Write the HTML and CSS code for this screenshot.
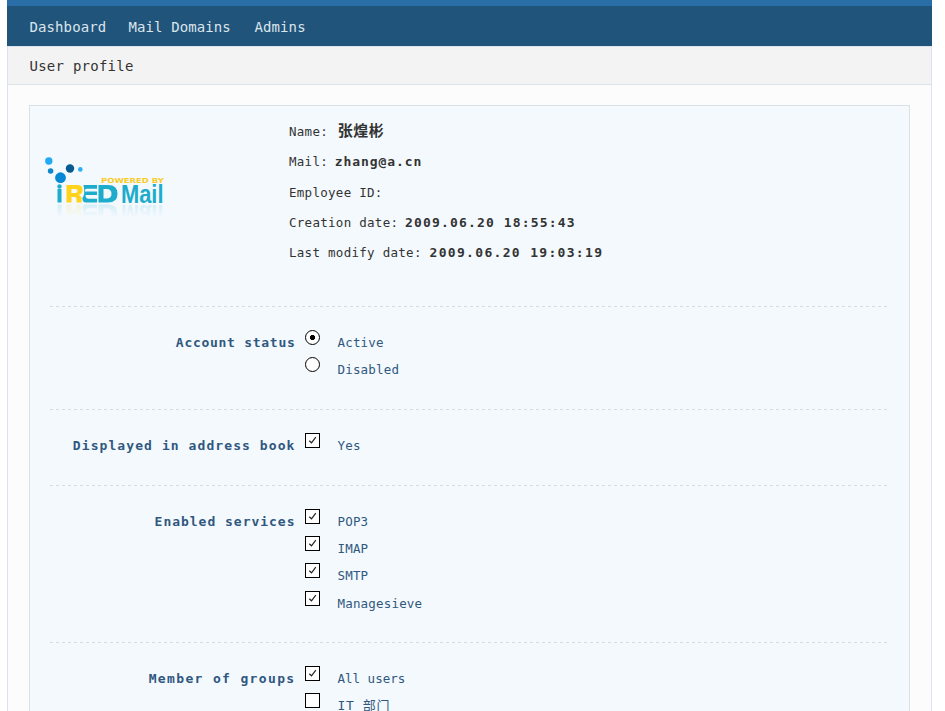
FILE: index.html
```html
<!DOCTYPE html>
<html lang="en">
<head>
<meta charset="utf-8">
<title>User profile</title>
<link rel="stylesheet" href="styles.css">
</head>
<body>
<div class="page">
  <nav class="nav"><a class="n1">Dashboard</a><a class="n2">Mail Domains</a><a class="n3">Admins</a></nav>
  <h1 class="title">User profile</h1>
  <main class="content">
    <form class="panel">
      <div class="summary">
        <svg class="logo" width="126" height="68" viewBox="0 0 126 68" role="img" aria-label="iRedMail">
          <defs>
            <linearGradient id="fade" x1="0" y1="0" x2="0" y2="1"><stop offset="0" stop-color="#f4f9fd" stop-opacity=".84"/><stop offset="1" stop-color="#f4f9fd"/></linearGradient>
            <g id="word">
              <path fill="#1eaccd" d="M12.500 34h4v13.500h-4z"/>
              <circle cx="14.500" cy="31.500" r="2.200" fill="#1eaccd"/>
              <path fill="#ffd21c" fill-rule="evenodd" d="M21.500 30h11q5 0 5 5 0 4-4 5 3 1 3 3.500v4h-5v-3.500q0-2-2-2h-3v5.500h-5zM26.500 34v4h4q2 0 2-2t-2-2z"/>
              <path fill="#1eaccd" fill-rule="evenodd" d="M38.500 30H52v3.700H41.500q-1.500 0-1.500 1.800v1h12v3.500H40.500q0 3.700 3 3.700H52v3.800H41q-4 0-3.500-5 3-3 1-12.500zM53.500 30H63q9.500 0 9.500 8.700T63 47.500h-9.500zM58.500 34v9.500h3q5 0 5-4.700t-5-4.800z"/>
              <text class="mail" x="76" y="47.500" textLength="42.500" lengthAdjust="spacingAndGlyphs">Mail</text>
            </g>
          </defs>
          <circle cx="3.800" cy="6" r="3.700" fill="#22aaf5"/><circle cx="5.600" cy="16" r="2.800" fill="#1186ca"/>
          <circle cx="15.500" cy="22.700" r="5.400" fill="#0788d7"/><circle cx="25" cy="13.500" r="4.200" fill="#065c90"/><circle cx="35.300" cy="14.400" r="2.300" fill="#2daff5"/>
          <text class="powered" x="56" y="27.500" textLength="63" lengthAdjust="spacingAndGlyphs">POWERED BY</text>
          <use href="#word"/>
          <use href="#word" transform="matrix(1 0 0 -1 0 97)"/>
          <rect x="0" y="48.500" width="126" height="14" fill="url(#fade)"/>
          <rect x="0" y="62" width="126" height="12" fill="#f4f9fd"/>
        </svg>
        <div class="facts">
          <p>Name: <b class="cjk">张煌彬</b></p>
          <p>Mail: <b class="mailaddr">zhang@a.cn</b></p>
          <p>Employee ID:</p>
          <p>Creation date: <b class="created">2009.06.20 18:55:43</b></p>
          <p>Last modify date: <b class="modified">2009.06.20 19:03:19</b></p>
        </div>
      </div>
      <section class="row status">
        <h2>Account status</h2>
        <div class="options">
          <label><input type="radio" name="status" checked><span>Active</span></label>
          <label><input type="radio" name="status"><span>Disabled</span></label>
        </div>
      </section>
      <section class="row book">
        <h2>Displayed in address book</h2>
        <div class="options"><label><input type="checkbox" checked><span>Yes</span></label></div>
      </section>
      <section class="row services">
        <h2>Enabled services</h2>
        <div class="options">
          <label><input type="checkbox" checked><span>POP3</span></label>
          <label><input type="checkbox" checked><span>IMAP</span></label>
          <label><input type="checkbox" checked><span>SMTP</span></label>
          <label><input type="checkbox" checked><span>Managesieve</span></label>
        </div>
      </section>
      <section class="row groups">
        <h2>Member of groups</h2>
        <div class="options">
          <label><input type="checkbox" checked><span class="tight">All users</span></label>
          <label><input type="checkbox"><span class="dept">IT 部门</span></label>
        </div>
      </section>
    </form>
  </main>
</div>
</body>
</html>
```
FILE: styles.css
```css
* { box-sizing: border-box; margin: 0; padding: 0; }
html { background: #fff; overflow: hidden; }
body {
  font: 12.5px/20px "DejaVu Sans Mono", "Noto Sans CJK SC", monospace;
  letter-spacing: .28px;
  color: #333;
}
.page {
  display: flex;
  flex-direction: column;
  width: 925px;
  height: 711px;
  margin-left: 7px;
  overflow: hidden;
}
.nav {
  display: flex;
  flex: none;
  height: 46px;
  padding-left: 22.5px;
  border-top: 6px solid #296ea6;
  background: #20547b;
  color: #dce5eb;
  font-size: 14px;
  line-height: 42px;
  letter-spacing: .1px;
}
.n1 { width: 99px; }
.n2 { width: 126px; }
.title {
  flex: none;
  height: 39px;
  padding-left: 21.5px;
  border: 1px solid #dce3ec;
  background: #f3f3f3;
  font-size: 14px;
  font-weight: 400;
  line-height: 39px;
  letter-spacing: .25px;
}
.content {
  flex: 1;
  min-height: 0;
  padding: 20px 21px 0;
  border: solid #dce3ec;
  border-width: 0 1px;
  background: #fcfcfc;
}
.panel {
  height: 606px;
  padding: 0 22px 0 20px;
  border: 1px solid #d9e0e6;
  border-bottom: 0;
  background: #f4f9fd;
  overflow: hidden;
}
.summary { display: flex; height: 200px; }
.logo { flex: none; margin: 49px 0 0 -5px; }
.mail { font: bold 25px "Liberation Sans", sans-serif; fill: #1eaccd; letter-spacing: 0; }
.powered { font: bold 7px "DejaVu Sans", sans-serif; fill: #f9cc28; letter-spacing: 0; }
.facts { margin: 11px 0 0 118px; line-height: 30.3px; }
.facts b { font-size: 13px; letter-spacing: 1.32px; }
.facts .cjk { font-size: 15px; letter-spacing: .4px; line-height: 20px; margin-left: 2px; }
.facts .mailaddr { letter-spacing: .92px; margin-left: -1px; }
.facts .created { letter-spacing: 1.15px; margin-left: -1px; }
.row {
  display: grid;
  grid-template-columns: 245.5px 1fr;
  column-gap: 9.5px;
  padding-top: 24px;
  background: repeating-linear-gradient(90deg, #d6dee3 0 3px, transparent 3px 6px) top / 100% 1px no-repeat;
}
.status { height: 103px; }
.book { height: 76px; }
.services { height: 157px; }
.groups { height: 70px; }
.row h2 {
  justify-self: end;
  padding-top: 1px;
  font-size: 13px;
  line-height: 24px;
  color: #30587f;
  letter-spacing: .72px;
  white-space: nowrap;
}
.book h2 { letter-spacing: 1.08px; }
.services h2 { letter-spacing: .98px; }
.groups h2 { letter-spacing: 1.35px; }
.options label { display: flex; height: 27.2px; color: #30587f; }
.options span { margin: 3px 0 0 17.5px; letter-spacing: .18px; white-space: nowrap; }
.options .tight { letter-spacing: 0; }
.options .dept { font-size: 13px; letter-spacing: .6px; }
input {
  appearance: none;
  flex: none;
  width: 15px;
  height: 15px;
  border: 1px solid #000;
  background: #fff;
}
input[type="radio"] { border-radius: 50%; }
input[type="radio"]:checked { background: radial-gradient(circle, #000 2.3px, #fff 2.9px); }
input[type="checkbox"]:checked {
  background: #fff url("data:image/svg+xml,%3Csvg xmlns='http://www.w3.org/2000/svg' viewBox='0 0 13 13'%3E%3Cpath d='M3.300 6.800L5.500 8.800L9.800 3.200' fill='none' stroke='%23222' stroke-width='1.200'/%3E%3C/svg%3E");
}
```
